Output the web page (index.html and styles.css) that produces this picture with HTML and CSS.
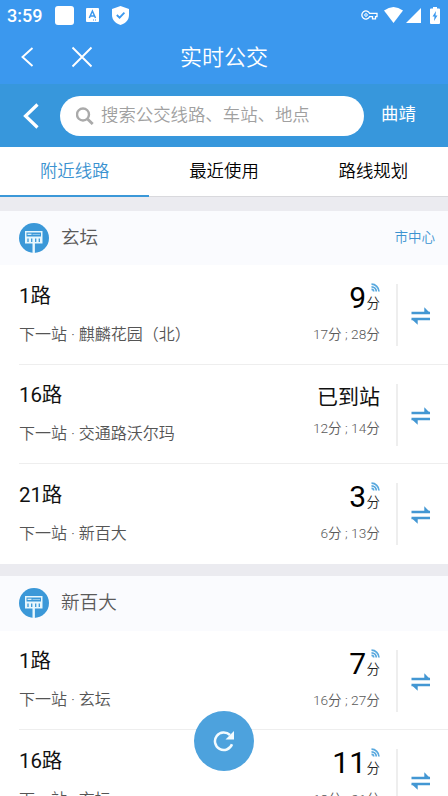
FILE: index.html
```html
<!DOCTYPE html>
<html lang="zh-CN">
<head>
<meta charset="utf-8">
<title>实时公交</title>
<link rel="stylesheet" href="styles.css">
</head>
<body>
<svg class="defs" aria-hidden="true">
  <symbol id="stop" viewBox="0 0 30 30"><circle cx="15" cy="15" r="15" fill="#3b98d8"/><path d="M6 8h17.5v12.5H6z" fill="#e8f7fd"/><path d="M7.500 9.500h14.500v4h-14.500z" fill="#3b98d8"/><path d="M13.500 11h7.500v1h-7.500z" fill="#8cc5ea"/><path d="M8.500 11.300h4" stroke="#e8f7fd" stroke-width="1.200"/><path d="M9 15.500v3.500M12.700 15.500v3.500M16.700 15.500v3.500M20.300 15.500v3.500" stroke="#3b98d8" stroke-width="1.300"/><path d="M14.700 20v10" stroke="#e8f7fd" stroke-width="2.400"/></symbol>
  <symbol id="swap" viewBox="0 0 20 18"><path d="M.5 6h18.500M.5 12h18.500" stroke="#4397d3" stroke-width="2.600"/><path d="M13.300.3l5.900 6h-5.900zM6.700 17.800L.5 12h6.200z" fill="#4397d3"/></symbol>
  <symbol id="live" viewBox="0 0 9 9"><path d="M.5 1.200A7.600 7.600 0 0 1 8 8.500M.5 3.800A4.800 4.800 0 0 1 5.300 8.500M.5 6.400A2.200 2.200 0 0 1 2.700 8.500" fill="none" stroke="#58a8de" stroke-width="1.700"/></symbol>
</svg>
<div class="screen">
  <header class="top">
    <div class="status">
      <span class="clock">3:59</span>
      <i class="square"></i>
      <svg class="abox" width="13" height="14" viewBox="0 0 13 14"><rect width="13" height="14" rx="1" fill="#fff"/><path d="M3.300 10L6.400 3l3.100 7M4.400 7.900h4" fill="none" stroke="#3b98ee" stroke-width="1.500"/><path d="M7 12h1m1 0h1" stroke="#3b98ee"/></svg>
      <svg class="shield" width="17" height="19" viewBox="0 0 17 19"><path d="M8.500 0L17 3v6c0 5-3.500 8.500-8.500 10C3.500 17.500 0 14 0 9V3z" fill="#fff"/><path d="M4.800 9l2.800 2.700 4.800-5" fill="none" stroke="#3b98ee" stroke-width="1.800"/></svg>
      <svg class="key" width="17" height="10" viewBox="0 0 17 10"><path d="M8.700 3.400h7.300v3.200h-1.500v2.200h-3V6.600H8.700A4.100 4.100 0 1 1 8.700 3.400z" fill="none" stroke="#fff" stroke-width="1.300"/><circle cx="5" cy="5" r="1.300" fill="none" stroke="#fff"/></svg>
      <svg class="wifi" width="19" height="16" viewBox="0 0 19 16"><path d="M0 3.500Q9.500-3.500 19 3.500L9.500 16z" fill="#fff"/></svg>
      <svg class="signal" width="15" height="15" viewBox="0 0 15 15"><path d="M15 0v15H0z" fill="#fff"/></svg>
      <svg class="battery" width="10" height="17" viewBox="0 0 10 17"><path d="M3 0h4v1.500h2q1 0 1 1V16q0 1-1 1H1q-1 0-1-1V2.500q0-1 1-1h2z" fill="#fff"/><path d="M6 4L2.500 9.500h2L4 14l3.500-5.500h-2z" fill="#3b98ee"/></svg>
    </div>
    <div class="titlebar">
      <svg class="close-set" width="75" height="22" viewBox="0 0 75 22"><path d="M12.500 2L2.500 11l10 9M52.500 1.500l19 19M71.500 1.500l-19 19" fill="none" stroke="#fff" stroke-width="1.900"/></svg>
      <h1>实时公交</h1>
    </div>
  </header>
  <div class="search-bar">
    <svg width="16" height="26" viewBox="0 0 16 26"><path d="M14.500 1.500L2.500 13l12 11.500" fill="none" stroke="#fff" stroke-width="3.200"/></svg>
    <div class="search">
      <svg width="18" height="18" viewBox="0 0 18 18"><circle cx="7" cy="7.500" r="6" fill="none" stroke="#aaa" stroke-width="2.400"/><path d="M11.500 12l5.200 5" stroke="#aaa" stroke-width="2.900"/></svg>
      <span>搜索公交线路、车站、地点</span>
    </div>
    <span class="city">曲靖</span>
  </div>
  <nav class="tabs"><a class="active">附近线路</a><a>最近使用</a><a>路线规划</a></nav>

  <section class="station">
    <div class="station-head"><svg width="30" height="30"><use href="#stop"/></svg><h2>玄坛</h2><span class="center">市中心</span></div>
    <div class="route">
      <div class="info"><h3>1路</h3><p>下一站 · 麒麟花园（北）</p></div>
      <div class="times"><div class="eta"><b>9</b><span class="unit"><svg width="9" height="9"><use href="#live"/></svg>分</span></div><p>17分 ; 28分</p></div>
      <div class="swap"><svg width="20" height="18"><use href="#swap"/></svg></div>
    </div>
    <div class="route">
      <div class="info"><h3>16路</h3><p>下一站 · 交通路沃尔玛</p></div>
      <div class="times arrived"><div class="eta">已到站</div><p>12分 ; 14分</p></div>
      <div class="swap"><svg width="20" height="18"><use href="#swap"/></svg></div>
    </div>
    <div class="route">
      <div class="info"><h3>21路</h3><p>下一站 · 新百大</p></div>
      <div class="times"><div class="eta"><b>3</b><span class="unit"><svg width="9" height="9"><use href="#live"/></svg>分</span></div><p>6分 ; 13分</p></div>
      <div class="swap"><svg width="20" height="18"><use href="#swap"/></svg></div>
    </div>
  </section>

  <section class="station">
    <div class="station-head"><svg width="30" height="30"><use href="#stop"/></svg><h2>新百大</h2></div>
    <div class="route">
      <div class="info"><h3>1路</h3><p>下一站 · 玄坛</p></div>
      <div class="times"><div class="eta"><b>7</b><span class="unit"><svg width="9" height="9"><use href="#live"/></svg>分</span></div><p>16分 ; 27分</p></div>
      <div class="swap"><svg width="20" height="18"><use href="#swap"/></svg></div>
    </div>
    <div class="route">
      <div class="info"><h3>16路</h3><p>下一站 · 玄坛</p></div>
      <div class="times"><div class="eta"><b>11</b><span class="unit"><svg width="9" height="9"><use href="#live"/></svg>分</span></div><p>18分 ; 21分</p></div>
      <div class="swap"><svg width="20" height="18"><use href="#swap"/></svg></div>
    </div>
  </section>
  <div class="refresh"><svg width="22" height="22" viewBox="0 0 22 22"><path d="M19 14.300A8.800 8.800 0 1 1 17 5" fill="none" stroke="#f2fbff" stroke-width="2.500"/><path d="M21 1v8.500h-8.500z" fill="#f2fbff"/></svg></div>
</div>
</body>
</html>
```
FILE: styles.css
```css
* { box-sizing: border-box; margin: 0; padding: 0; }
body { width: 448px; height: 796px; overflow: hidden; background: #ebebf0; font-family: Roboto, "Noto Sans CJK SC", sans-serif; }
h1, h2, h3, b { font-weight: 400; }
svg { display: block; flex: none; }
.defs { position: absolute; width: 0; height: 0; }
.screen { position: relative; width: 448px; height: 796px; overflow: hidden; }
.top { height: 84px; background: #3b98ee; color: #fff; }
.status { height: 30px; display: flex; align-items: center; padding: 0 8px 0 7px; }
.clock { width: 48px; font-size: 18px; font-weight: 500; line-height: 30px; padding-top: 1px; }
.square { width: 19px; height: 19px; border-radius: 3px; background: #fff; }
.abox { margin-left: 12px; }
.shield { margin-left: 13px; }
.key { margin-left: auto; }
.wifi { margin-left: 6px; }
.signal { margin-left: 3px; }
.battery { margin-left: 9px; }
.titlebar { height: 54px; display: grid; grid-template-columns: 100px 1fr 100px; grid-template-rows: 54px; align-items: center; }
.close-set { margin-left: 20px; }
.titlebar h1 { padding-top: 1px; font-size: 22px; font-weight: 350; line-height: 54px; text-align: center; }
.search-bar { height: 63px; background: #3797dc; display: flex; align-items: center; padding-left: 23px; color: #fff; }
.search { width: 304px; height: 40px; margin: 1px 0 0 21px; border-radius: 20px; background: #fff; display: flex; align-items: center; gap: 7px; padding-left: 16px; color: #a0a0a0; font-size: 17.4px; font-weight: 350; line-height: 36px; white-space: nowrap; }
.search span { padding-bottom: 3px; }
.city { margin: -6px 0 0 17px; font-size: 17.4px; }
.tabs { height: 50px; display: grid; grid-template-columns: repeat(3, 1fr); background: #fff; border-bottom: 1px solid #d9d9dd; font-size: 17.4px; font-weight: 350; line-height: 48px; text-align: center; color: #000; }
.tabs .active { color: #3b92d0; border-bottom: 2px solid #3b98d8; }
.station { background: #fff; margin-top: 14px; }
.station + .station { margin-top: 12px; }
.station-head { height: 54px; background: #fafbfe; display: flex; align-items: center; padding: 0 13px 0 19px; }
.station + .station .station-head { height: 55px; }
.station-head h2 { margin-left: 12px; font-size: 18.600px; font-weight: 350; line-height: 26px; color: #5a5a5a; }
.center { margin: -5px 0 0 auto; font-size: 13.500px; font-weight: 350; color: #3b92d0; }
.route { display: flex; height: 99.500px; margin-left: 19px; border-bottom: 1px solid #eee; }
.route:last-child { border-bottom: 0; }
.info { flex: 1; }
.info h3 { margin-top: 15.500px; font-size: 20.500px; line-height: 30px; color: #111; letter-spacing: -.1px; }
.info p { margin-top: 12px; font-size: 16px; font-weight: 350; line-height: 24px; color: #555; white-space: nowrap; }
.times { text-align: right; }
.eta { height: 37px; margin-top: 14px; display: flex; justify-content: flex-end; align-items: flex-end; color: #111; }
.eta b { font-size: 30px; line-height: 37px; color: #000; }
.unit { width: 14px; margin: 0 0 3px; font-size: 13.500px; font-weight: 350; line-height: 20px; color: #222; }
.unit svg { margin: 0 0 1px 5px; }
.times p { margin-top: 7px; font-size: 13.700px; font-weight: 350; line-height: 22px; color: #5a5a5a; }
.arrived .eta { font-size: 21px; line-height: 34px; align-items: center; height: 35px; margin-top: 15px; }
.arrived p { margin-top: 2px; }
.swap { width: 52px; height: 62px; margin: 19px 0 0 16px; padding: 23px 0 0 13px; border-left: 2px solid #eee; }
.refresh { position: absolute; left: 194px; top: 711px; width: 60px; height: 60px; border-radius: 50%; background: #4da2dd; display: grid; place-items: center; }
```
